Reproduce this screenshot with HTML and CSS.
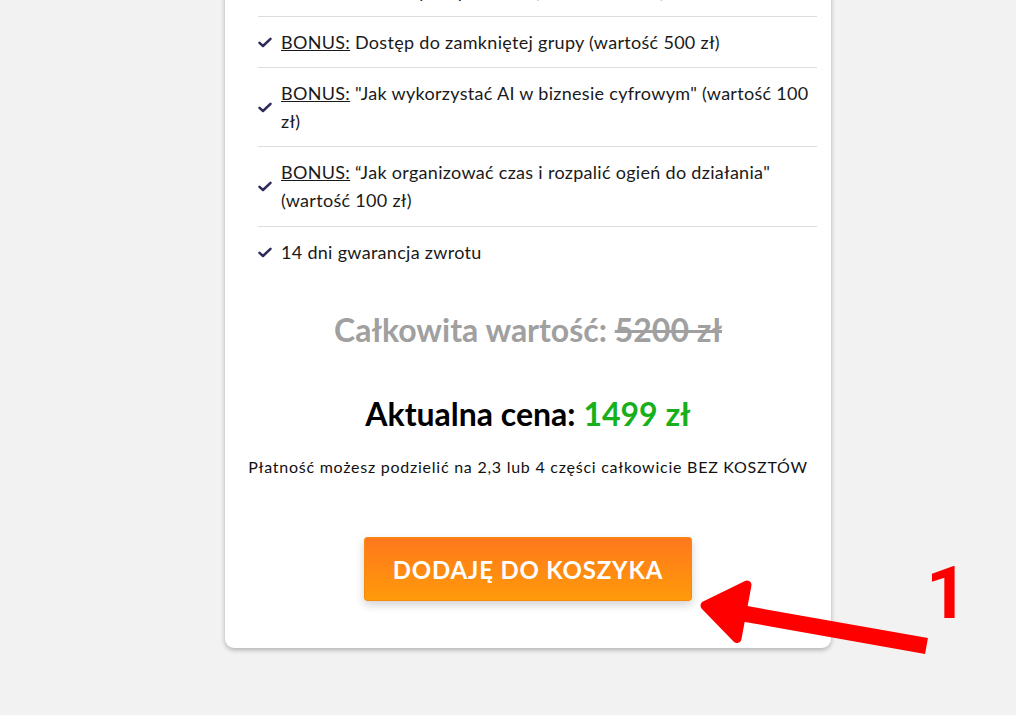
FILE: index.html
```html
<!DOCTYPE html>
<html lang="pl">
<head>
<meta charset="utf-8">
<title>Oferta</title>
<link rel="stylesheet" href="styles.css">
</head>
<body>
<div class="page">
  <div class="card">
    <ul class="features">
      <li><svg class="check" viewBox="0 0 14 11"><path d="M1.5 5.8 L5 9 L12.5 1.8"/></svg><span><u>BONUS:</u> Szablony do pobrania (wartość 200 zł)</span></li>
      <li><svg class="check" viewBox="0 0 14 11"><path d="M1.5 5.8 L5 9 L12.5 1.8"/></svg><span><u>BONUS:</u> Dostęp do zamkniętej grupy (wartość 500 zł)</span></li>
      <li><svg class="check" viewBox="0 0 14 11"><path d="M1.5 5.8 L5 9 L12.5 1.8"/></svg><span><u>BONUS:</u> "Jak wykorzystać AI w biznesie cyfrowym" (wartość 100 zł)</span></li>
      <li class="tall"><svg class="check" viewBox="0 0 14 11"><path d="M1.5 5.8 L5 9 L12.5 1.8"/></svg><span><u>BONUS:</u> “Jak organizować czas i rozpalić ogień do działania" (wartość 100 zł)</span></li>
      <li><svg class="check" viewBox="0 0 14 11"><path d="M1.5 5.8 L5 9 L12.5 1.8"/></svg><span>14 dni gwarancja zwrotu</span></li>
    </ul>
    <p class="total">Całkowita wartość: <s>5200 zł</s></p>
    <p class="current">Aktualna cena: <span class="green">1499 zł</span></p>
    <p class="note">Płatność możesz podzielić na 2,3 lub 4 części całkowicie BEZ KOSZTÓW</p>
    <div class="cta-row"><a class="cta" href="#">DODAJĘ DO KOSZYKA</a></div>
  </div>
</div>
<svg class="arrow" width="1016" height="715" viewBox="0 0 1016 715">
  <line x1="735" y1="612" x2="926.5" y2="646" stroke="#ff0000" stroke-width="16"/>
  <polygon points="705,605.5 747,585 737,638.5" fill="#ff0000" stroke="#ff0000" stroke-width="9" stroke-linejoin="round"/>
</svg>
<div class="num">1</div>
</body>
</html>
```
FILE: styles.css
```css
html, body {
  margin: 0;
  padding: 0;
  background: #f2f2f2;
  height: 715px;
  overflow: hidden;
}
body {
  font-family: "Lato", "Noto Sans", sans-serif;
  color: #1a1a1a;
  position: relative;
}
.page {
  padding-left: 225px;
}
.card {
  width: 606px;
  margin-top: -34px;
  background: #fff;
  border-radius: 0 0 9px 9px;
  box-shadow: 0 2px 5px rgba(0, 0, 0, 0.28);
  padding-bottom: 47px;
}
.features {
  list-style: none;
  margin: 0 14px 0 33px;
  padding: 0;
}
.features li {
  display: flex;
  align-items: center;
  gap: 9px;
  padding: 11px 0;
  font-size: 18px;
  line-height: 28px;
  letter-spacing: 0.3px;
}
.features li.tall {
  padding-bottom: 12px;
}
.features li + li {
  border-top: 1px solid #dddddd;
}
.check {
  width: 14px;
  height: 11px;
  flex: none;
}
.check path {
  fill: none;
  stroke: #2d2a5c;
  stroke-width: 2.5;
  stroke-linecap: round;
  stroke-linejoin: round;
}
.total {
  margin: 33px 0 0;
  text-align: center;
  font-size: 32px;
  line-height: 40px;
  font-weight: 700;
  color: #a0a0a0;
}
.current {
  margin: 44px 0 0;
  text-align: center;
  font-size: 32px;
  line-height: 40px;
  font-weight: 700;
  color: #000;
}
.green {
  color: #17b01b;
}
.note {
  margin: 23px 0 0;
  text-align: center;
  font-size: 16px;
  line-height: 20px;
  letter-spacing: 0.75px;
  color: #111;
}
.cta-row {
  display: flex;
  justify-content: center;
  margin-top: 60px;
}
.cta {
  display: flex;
  align-items: center;
  justify-content: center;
  width: 328px;
  height: 64px;
  box-sizing: border-box;
  border-radius: 3px;
  border: 1px solid #f58a10;
  background: linear-gradient(to bottom, #ff781c, #ff9a0a);
  box-shadow: 0 4px 10px rgba(0, 0, 0, 0.18);
  color: #fff;
  font-size: 24px;
  font-weight: 700;
  text-decoration: none;
  letter-spacing: 0.8px;
}
.arrow {
  position: absolute;
  left: 0;
  top: 0;
}
.num {
  position: absolute;
  left: 926px;
  top: 557px;
  font-family: "Roboto", "Liberation Sans", sans-serif;
  font-weight: 700;
  font-size: 73px;
  line-height: 72px;
  color: #ff0000;
}
```
